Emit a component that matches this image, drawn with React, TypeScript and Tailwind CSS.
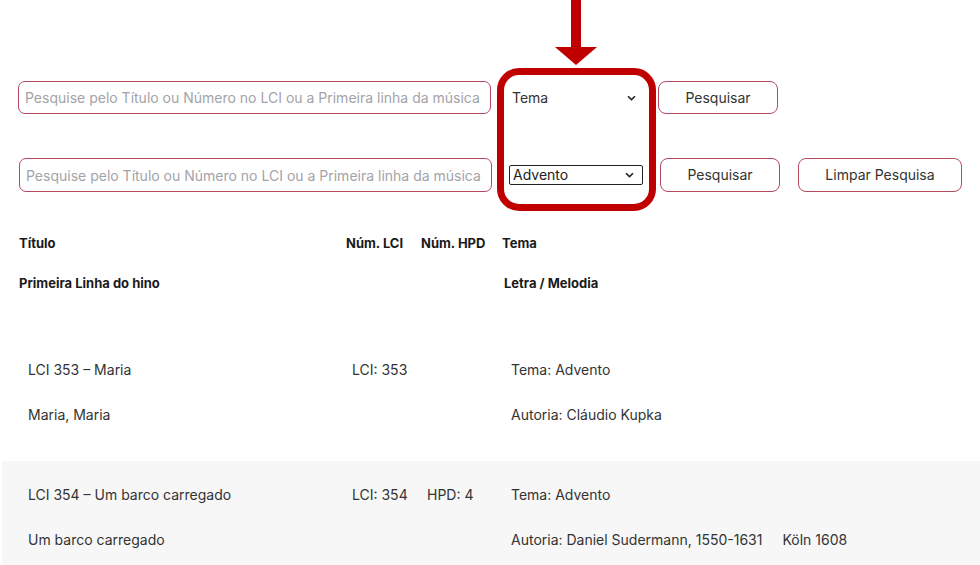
import React from "react";

const Chevron = () => (
  <svg width="9" height="6" viewBox="0 0 9 6" className="pointer-events-none absolute right-[9px] top-1/2 -translate-y-1/2">
    <path d="M1 1.2 L4.5 4.6 L8 1.2" fill="none" stroke="#222" strokeWidth="1.6" />
  </svg>
);

const inputCls =
  "h-full w-[473px] rounded-[7px] border-[1.5px] border-[#b5475f] bg-white px-[6px] text-[14px] text-[#333] placeholder:text-[#a3a3a8] outline-none";
const btnCls =
  "h-full rounded-[8px] border-[1.5px] border-[#b5475f] bg-white text-[14px] text-[#333]";

export default function App() {
  return (
    <div
      className="relative min-h-[565px] w-[980px] overflow-hidden bg-white text-[#333]"
      style={{ fontFamily: "Inter, 'Noto Sans', sans-serif" }}
    >
      {/* search rows */}
      <div className="flex flex-col pt-[81px]">
        <div className="flex h-[33px] items-center">
          <input className={`${inputCls} ml-[18px]`} placeholder="Pesquise pelo Título ou Número no LCI ou a Primeira linha da música" />
          <div className="relative ml-[14px] h-full w-[140px]">
            <select className="h-full w-full appearance-none bg-transparent pl-[7px] text-[14px] text-[#333] outline-none">
              <option>Tema</option>
            </select>
            <Chevron />
          </div>
          <button className={`${btnCls} ml-[13px] w-[120px]`}>Pesquisar</button>
        </div>
        <div className="mt-[44px] flex h-[34px] items-center">
          <input className={`${inputCls} ml-[19px]`} placeholder="Pesquise pelo Título ou Número no LCI ou a Primeira linha da música" />
          <div className="relative ml-[17px] h-[20px] w-[134px]">
            <div className="flex h-full w-full items-center rounded-[2px] border-[1.5px] border-[#222] bg-white pl-[3px] text-[14px] leading-[16px] text-[#222]">
              Advento
            </div>
            <Chevron />
          </div>
          <button className={`${btnCls} ml-[17px] w-[120px] pb-[2px]`}>Pesquisar</button>
          <button className={`${btnCls} ml-[18px] w-[164px] pb-[2px]`}>Limpar Pesquisa</button>
        </div>
      </div>

      {/* table header */}
      <div className="mt-[41px] pl-[19px] text-[13px] font-bold leading-[20px] text-[#1a1a1a]">
        <div className="grid grid-cols-[327px_75px_81px_1fr]">
          <div>Título</div>
          <div>Núm. LCI</div>
          <div>Núm. HPD</div>
          <div>Tema</div>
        </div>
        <div className="mt-[20px] grid grid-cols-[485px_1fr]">
          <div>Primeira Linha do hino</div>
          <div>Letra / Melodia</div>
        </div>
      </div>

      {/* rows */}
      <div className="mt-[44px] text-[14px] leading-[20px] text-[#333]">
        <div className="pb-[36px] pl-[28px] pt-[23px]">
          <div className="grid grid-cols-[324px_75px_84px_1fr]">
            <div>LCI 353 – Maria</div>
            <div>LCI: 353</div>
            <div></div>
            <div>Tema: Advento</div>
          </div>
          <div className="mt-[25px] grid grid-cols-[483px_1fr]">
            <div>Maria, Maria</div>
            <div>Autoria: Cláudio Kupka</div>
          </div>
        </div>
        <div className="ml-[2px] bg-[#f7f7f7] pb-[37px] pl-[26px] pt-[24px]">
          <div className="grid grid-cols-[324px_75px_84px_1fr]">
            <div>LCI 354 – Um barco carregado</div>
            <div>LCI: 354</div>
            <div>HPD: 4</div>
            <div>Tema: Advento</div>
          </div>
          <div className="mt-[25px] grid grid-cols-[483px_1fr]">
            <div>Um barco carregado</div>
            <div className="flex gap-[20px]">
              <span>Autoria: Daniel Sudermann, 1550-1631</span>
              <span>Köln 1608</span>
            </div>
          </div>
        </div>
      </div>

      {/* annotation overlay */}
      <div className="pointer-events-none absolute left-[497px] top-[68px] h-[143px] w-[159px] rounded-[22px] border-[7px] border-[#c00000]" />
      <svg className="pointer-events-none absolute left-[554px] top-0" width="44" height="66" viewBox="0 0 44 66">
        <rect x="17" y="0" width="10" height="49" fill="#c00000" />
        <polygon points="1,47 43,47 22,65" fill="#c00000" />
      </svg>
    </div>
  );
}
